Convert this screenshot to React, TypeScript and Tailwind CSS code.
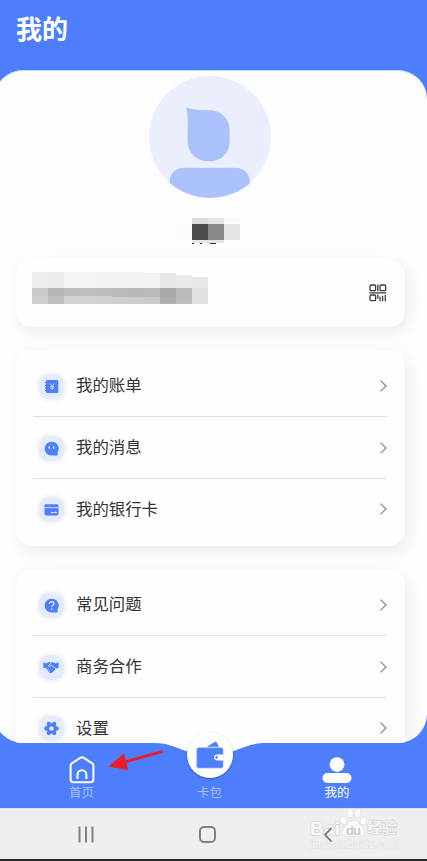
import React from 'react';

type RowProps = { label: string; icon: React.ReactNode; last?: boolean };

function Row({ label, icon, last }: RowProps) {
  return (
    <div className={`ml-[17px] mr-[18px] flex shrink-0 items-center border-b ${last ? 'h-[61px] border-transparent' : 'h-[62px] border-[#e2e2e2]'}`}>
      <div className="ml-[6px] mt-[1px] flex size-[25px] items-center justify-center rounded-[10px] bg-[#e4ebfe] pr-[1px] shadow-[0_0_5px_1px_rgba(0,0,0,0.07)]">
        {icon}
      </div>
      <span className="-mt-[3px] ml-[12px] flex-1 text-[16.4px] leading-6 text-[#343434]">{label}</span>
      <svg className="block" width="8" height="14" viewBox="0 0 8 14" fill="none" stroke="#8b8b8b" strokeWidth="1.3">
        <path d="M1.5 1.6 7 7 1.5 12.4" />
      </svg>
    </div>
  );
}

const cardShadow = 'shadow-[3px_5px_16px_rgba(0,0,0,0.07)]';

const BillIcon = () => (
  <svg width="15" height="15" viewBox="0 0 15 15">
    <rect x="2" y="1" width="12.3" height="13" rx="1" fill="#4d7ffd" />
    <path d="M1 3.5h2.6M1 6.2h2.6M1 8.9h2.6M1 11.6h2.6" stroke="#4d7ffd" strokeWidth="1.2" />
    <path d="m6.2 4.6 2 2.7 2-2.7M8.2 7.3v3.6M6.2 7.6h4M6.2 9.2h4" stroke="#c8d8ff" strokeWidth="1" fill="none" />
  </svg>
);
const MessageIcon = () => (
  <svg width="15" height="15" viewBox="0 0 15 15">
    <path d="M7.5.7a6.9 6.9 0 1 0 0 13.8h6.1v-3.2A6.9 6.9 0 0 0 7.5.7Z" fill="#4d7ffd" />
    <path d="M5.3 5.7v1.6M9.7 5.7v1.6" stroke="#e4ebfe" strokeWidth="1.4" strokeLinecap="round" />
  </svg>
);
const CardIcon = () => (
  <svg width="15" height="15" viewBox="0 0 15 15">
    <rect x=".5" y="2.2" width="14" height="11.2" rx="1.3" fill="#4d7ffd" />
    <path d="M.5 5.6h14" stroke="#c1d2ff" strokeWidth="1.1" />
    <path d="M6.8 10.6h5.7l-1.2-1" stroke="#e4ebfe" strokeWidth="1" fill="none" />
  </svg>
);
const HelpIcon = () => (
  <svg width="15" height="15" viewBox="0 0 15 15">
    <path d="M7.5.7a6.9 6.9 0 1 0 0 13.8h6.1v-3.2A6.9 6.9 0 0 0 7.5.7Z" fill="#4d7ffd" />
    <path d="M5.4 5.8c0-2.8 4.5-2.7 4.5-.1 0 1.5-2.2 1.6-2.2 3.4" stroke="#e4ebfe" strokeWidth="1.3" fill="none" />
    <circle cx="7.7" cy="11" r=".85" fill="#e4ebfe" />
  </svg>
);
const HandsIcon = () => (
  <svg width="16" height="15" viewBox="0 0 16 15">
    <path d="M.3 2.2 3 3.5 6.2 2 8 2.8 9.7 2l3.2 1.5 2.8-1.3v5.6l-2 .5-4.8 4.5c-.8.6-1.5.5-2.2 0L2.3 8.1l-2-.4Z" fill="#4d7ffd" />
    <path d="M8.2 3.1 5.3 5.7c1 1.1 2.2.6 3.4-.4l4.7 4M2.3 8.8l1.6-1.4M4 10.3l1.6-1.4M5.6 11.7l1.5-1.3" stroke="#e4ebfe" strokeWidth=".9" fill="none" />
  </svg>
);
const GearIcon = () => (
  <svg width="15" height="15" viewBox="0 0 15 15">
    <g fill="#4d7ffd">
      <circle cx="7.5" cy="7.5" r="5.2" />
      <circle cx="4.8" cy="2.9" r="2.1" />
      <circle cx="10.2" cy="2.9" r="2.1" />
      <circle cx="2.4" cy="7.5" r="2.2" />
      <circle cx="12.6" cy="7.5" r="2.2" />
      <circle cx="4.8" cy="12.1" r="2.1" />
      <circle cx="10.2" cy="12.1" r="2.1" />
    </g>
    <circle cx="7.5" cy="7.5" r="2.2" fill="#e4ebfe" />
  </svg>
);

const QrIcon = () => (
  <svg width="18" height="18" viewBox="0 0 18 18" fill="none" stroke="#3d3d42" strokeWidth="1.3">
    <rect x="1" y="1" width="5.6" height="5.7" rx="1" />
    <rect x="11" y="1" width="5.6" height="5.7" rx="1" />
    <rect x="1" y="11" width="5.6" height="5.7" rx="1" />
    <path d="M8.8.4v6.8M.4 8.8h16.8M8.8 10.6v4.2M11 12.5v4.8M13.6 11.8v5.5M16.3 10.7v6.6" />
  </svg>
);

const topTones = ['#ededed', '#ebebeb', '#f4f4f4', '#f4f4f4', '#f3f3f3', '#f3f3f3', '#f3f3f3', '#f3f3f3', '#e8e8e8', '#eaeaea', '#e6e6e6'];
const midTones = ['#c8c8c8', '#b5b5b5', '#bdbdbd', '#bebebe', '#bcbcbc', '#bababa', '#b8b8b8', '#bababa', '#a8a8a8', '#bababa', '#e0e0e0'];
const lowTones = ['#cecece', '#bebebe', '#d2d2d2', '#d2d2d2', '#d0d0d0', '#cfcfcf', '#cdcdcd', '#cacaca', '#afafaf', '#bdbdbd', '#e0e0e0'];
const topInset = [0, 0, 0, 0, 0, 0, 0, 1, 1, 3, 5];
const midHeight = [8, 8, 8, 8, 8, 9, 9, 9, 10, 12, 16];

function AccountMosaic() {
  return (
    <svg width="176" height="32" shapeRendering="crispEdges">
      {topTones.map((tone, i) => (
        <g key={i}>
          <rect x={i * 16} y={topInset[i]} width="16" height={16 - topInset[i]} fill={tone} />
          <rect x={i * 16} y="16" width="16" height="16" fill={lowTones[i]} />
          <rect x={i * 16} y="16" width="16" height={midHeight[i]} fill={midTones[i]} />
        </g>
      ))}
    </svg>
  );
}

export default function App() {
  return (
    <div className="relative flex h-[861px] w-[427px] flex-col overflow-hidden bg-[#4d7ffd] font-['Noto_Sans_CJK_SC',sans-serif]">
      <header className="h-[70px] shrink-0 pl-[16px] pt-[10px]">
        <h1 className="text-[26px] font-bold leading-[36px] text-white">我的</h1>
      </header>

      <main className="-ml-[6px] flex h-[673px] w-[433px] shrink-0 flex-col overflow-hidden rounded-[29px] border-t border-[#b3e2fc] bg-[#fdfdfd] pl-[22px] pr-[22px]">
        <svg className="ml-[133px] mt-[5px] shrink-0" width="122" height="122" viewBox="0 0 122 122">
          <defs><clipPath id="avatar"><circle cx="61" cy="61" r="61" /></clipPath></defs>
          <g clipPath="url(#avatar)">
            <rect width="122" height="122" fill="#ebeffd" />
            <path d="M37.5 32C45 34.5 52 34.5 60 34.5c12 0 20.2 8.5 20.2 19.5v12c0 11-8.5 19-20.2 19C47 85 39 76 39 64c0-14 .8-25-1.5-32Z" fill="#abc2fe" stroke="#a9bdea" strokeWidth=".7" />
            <path d="M21 130v-24c0-7.5 5-13.7 13-13.7h53c8 0 13.5 6.2 13.5 13.7v24Z" fill="#abc2fe" stroke="#a9bdea" strokeWidth=".7" />
          </g>
        </svg>
        <svg className="ml-[160px] mt-[20px] shrink-0" width="64" height="26" shapeRendering="crispEdges">
          <path fill="#fafafa" d="M0 6h16v16H0z" />
          <path fill="#dbdbdb" d="M16 0h16v6H16z" />
          <path fill="#e5e5e5" d="M32 0h16v6H32zM48 6h16v16H48z" />
          <path fill="#fafafa" d="M48 0h16v6H48z" />
          <path fill="#4b4b4b" d="M16 6h16v16H16z" />
          <path fill="#8a8a8a" d="M32 6h16v16H32z" />
          <path fill="#e5e5e5" d="M16 22h32v3H16z" />
          <path fill="#303030" d="M16 25h2v1h-2zM24 25h2v1h-2zM34 25h6v1h-6z" />
        </svg>
        <section className={`mt-[15px] flex h-[68px] w-[389px] shrink-0 items-center justify-between rounded-[16px] bg-[#fefefe] pl-[16px] pr-[18px] ${cardShadow}`}>
          <div className="-mt-[10px]"><AccountMosaic /></div>
          <QrIcon />
        </section>

        <section className={`mt-[23px] flex h-[196px] w-[389px] shrink-0 flex-col rounded-[16px] bg-[#fefefe] pt-[5px] ${cardShadow}`}>
          <Row label="我的账单" icon={<BillIcon />} />
          <Row label="我的消息" icon={<MessageIcon />} />
          <Row label="我的银行卡" icon={<CardIcon />} last />
        </section>

        <section className={`mt-[23px] flex h-[196px] w-[389px] shrink-0 flex-col rounded-[16px] bg-[#fefefe] pt-[5px] ${cardShadow}`}>
          <Row label="常见问题" icon={<HelpIcon />} />
          <Row label="商务合作" icon={<HandsIcon />} />
          <Row label="设置" icon={<GearIcon />} last />
        </section>
      </main>

      <nav className="relative grid h-[65px] shrink-0 grid-cols-[163px_93px_163px] text-[12.4px] leading-[16px]">
        <svg className="absolute left-[154px] top-[-1px]" width="112" height="14" viewBox="0 0 112 14">
          <path d="M0 0h112v1c-16 0-22 5-34 8.5L72 12H40l-6-2.5C22 6 15 1 0 1Z" fill="#fdfdfd" />
        </svg>
        <div className="flex flex-col items-center pt-[13px] text-[#a6bffe]">
          <svg width="26" height="28" viewBox="0 0 26 28" fill="none" stroke="#fff" strokeWidth="2" strokeLinejoin="round">
            <path d="M1.6 9.6c0-1 .4-1.7 1.2-2.3l8.8-5.6c.9-.6 1.9-.6 2.8 0l8.8 5.6c.8.6 1.2 1.3 1.2 2.3v13.8c0 1.8-1 2.8-2.8 2.8H4.4c-1.8 0-2.8-1-2.8-2.8Z" />
            <path d="M8.5 23v-4.3a4.4 4.4 0 0 1 8.9 0V23" />
          </svg>
          <span>首页</span>
        </div>
        <div className="relative flex flex-col items-center text-[#a6bffe]">
          <div className="-mt-[11px] flex size-[46px] shrink-0 items-center justify-center rounded-full bg-[#fefefe] shadow-[0_1px_2px_rgba(20,45,120,0.45)]">
            <svg width="28" height="28" viewBox="0 0 28 28">
              <path d="M11 5.7 18.2 1.2c1-.5 2-.5 2.7.5l2 4Z" fill="#4d7ffd" />
              <rect x=".8" y="6.8" width="26.2" height="20.2" rx="1.8" fill="#4d7ffd" stroke="#8aafff" strokeWidth=".7" />
              <path d="M27.5 13.4h-6.4a3 3 0 0 0 0 6h6.4Z" fill="#fff" />
              <circle cx="20.7" cy="16.4" r="1.3" fill="#4d7ffd" />
            </svg>
          </div>
          <span className="mt-[6px]">卡包</span>
        </div>
        <div className="-ml-[1px] flex flex-col items-center pt-[14px] text-white">
          <svg width="30" height="27" viewBox="0 0 30 27" fill="#fefefe">
            <circle cx="15" cy="7.6" r="7.4" />
            <rect x=".5" y="16" width="29" height="10" rx="5" />
          </svg>
          <span>我的</span>
        </div>
        <svg className="absolute left-[107px] top-[6px]" width="58" height="24" viewBox="0 0 58 24">
          <path d="M1.5 17.6 17 4.2l1.8 7.1L55.3 1l.7 2.8-36.5 10.3 1.7 7.2Z" fill="#ed1b24" />
        </svg>
      </nav>

      <footer className="relative flex h-[53px] shrink-0 border-b-2 border-t border-b-[#292729] border-t-[#d5e0f8] bg-[#efefef]">
        <svg className="ml-[77px] mt-[17px]" width="18" height="17" stroke="#808080" strokeWidth="2">
          <path d="M2.5.5v16M9 .5v16M15.5.5v16" />
        </svg>
        <div className="ml-[104px] mt-[17px] size-[17px] rounded-[5px] border-2 border-[#808080]" />
        <svg className="absolute left-[307px] top-[-3px] overflow-visible" width="94" height="46" viewBox="0 0 94 46">
          <g fill="#fafafa" stroke="#dcdcdc" strokeWidth=".7">
            <ellipse cx="36.5" cy="14.5" rx="3.2" ry="4.5" transform="rotate(-15 36.5 14.5)" />
            <ellipse cx="43" cy="7" rx="3.2" ry="4.7" />
            <ellipse cx="50.8" cy="7.2" rx="3.2" ry="4.7" transform="rotate(12 50.8 7.2)" />
            <ellipse cx="56.5" cy="15" rx="3.3" ry="4.2" transform="rotate(20 56.5 15)" />
            <path d="M46.5 14.5c5 0 6 4 9 7 5 5 2 9-3 9h-12c-5 0-8-4-3-9 3-3 4-7 9-7Z" />
          </g>
          <g fill="#f8f8f8" stroke="#d6d6d6" strokeWidth="1.4" strokeLinejoin="round" paintOrder="stroke">
            <text x="3" y="28.5" fontFamily="Liberation Sans" fontWeight="700" fontSize="18.5" textLength="30" lengthAdjust="spacingAndGlyphs">Bai</text>
            <text x="60" y="27" fontFamily="Noto Sans CJK SC" fontSize="15" fontWeight="500" textLength="30">经验</text>
          </g>
          <text x="39" y="28.5" fontFamily="Liberation Sans" fontWeight="700" fontSize="13" fill="#cbcbcb" textLength="15">du</text>
          <text x="3" y="42" fontFamily="Liberation Sans" fontSize="10" fill="#f8f8f8" stroke="#dedede" strokeWidth=".9" paintOrder="stroke" textLength="88" lengthAdjust="spacingAndGlyphs">jingyan.baidu.com</text>
        </svg>
        <svg className="relative ml-[107px] mt-[18px]" width="10" height="16" fill="none" stroke="#757575" strokeWidth="1.7">
          <path d="M8.5 1 2 7.8 8.5 14.7" />
        </svg>
      </footer>
    </div>
  );
}
